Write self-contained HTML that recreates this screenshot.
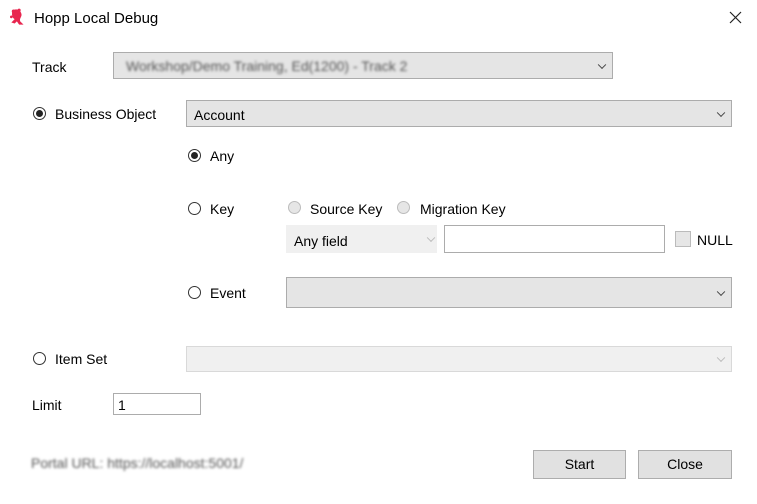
<!DOCTYPE html>
<html><head><style>
body{margin:0;width:757px;height:504px;background:#fff;position:relative;overflow:hidden;font-family:"Liberation Sans",sans-serif;font-size:14px;color:#000}
.a{position:absolute}
.t{position:absolute;line-height:16px;white-space:nowrap}
.cb{position:absolute;box-sizing:border-box;background:#e5e5e5;border:1px solid #acacac}
.cb.dis{background:#f0f0f0;border-color:#d9d9d9}
.arrow{position:absolute;right:7px;top:50%;width:5px;height:5px;border-right:1px solid #444;border-bottom:1px solid #444;transform:translateY(-70%) rotate(45deg)}
.dis .arrow{border-color:#bbb}
.r{position:absolute;width:11px;height:11px;border:1px solid #333;border-radius:50%;background:#fff}
.r.on::after{content:"";position:absolute;left:2px;top:2px;width:7px;height:7px;border-radius:50%;background:#222}
.r.d{border-color:#bcbcbc;background:#e6e6e6}
.in{position:absolute;box-sizing:border-box;border:1px solid #acacac;background:#fff}
.btn{position:absolute;box-sizing:border-box;border:1px solid #adadad;background:#e1e1e1;text-align:center;line-height:27px}
.blur{filter:blur(1.4px);color:#555}
</style></head><body>
<svg class="a" style="left:8px;top:8px" width="20" height="20" viewBox="0 0 16 18"><path d="M3 3 C5 0 10 1 11 5 C12 8 9 9 10 12 L13 15 L9 15 L7 12 L5 14 L2 13 L5 10 C3 9 2 6 3 3Z" fill="#e8264f"/><circle cx="4" cy="3" r="1.6" fill="#e8264f"/><circle cx="9" cy="2" r="1.4" fill="#e8264f"/><circle cx="2" cy="8" r="1.2" fill="#e8264f"/></svg>
<div class="t" style="left:34px;top:11px;font-size:15px">Hopp Local Debug</div>
<svg class="a" style="left:729px;top:11px" width="13" height="13"><path d="M1 1L12 12M12 1L1 12" stroke="#222" stroke-width="1.2"/></svg>

<div class="t" style="left:32px;top:59px">Track</div>
<div class="cb" style="left:113px;top:52px;width:500px;height:27px"><span class="t blur" style="left:12px;top:5px">Workshop/Demo Training, Ed(1200) - Track 2</span><div class="arrow"></div></div>

<div class="r on" style="left:33px;top:107px"></div>
<div class="t" style="left:55px;top:106px">Business Object</div>
<div class="cb" style="left:186px;top:100px;width:546px;height:27px"><span class="t" style="left:7px;top:6px">Account</span><div class="arrow"></div></div>

<div class="r on" style="left:188px;top:149px"></div>
<div class="t" style="left:210px;top:148px">Any</div>

<div class="r" style="left:188px;top:202px"></div>
<div class="t" style="left:210px;top:201px">Key</div>
<div class="r d" style="left:288px;top:201px"></div>
<div class="t" style="left:310px;top:201px">Source Key</div>
<div class="r d" style="left:397px;top:201px"></div>
<div class="t" style="left:420px;top:201px">Migration Key</div>

<div class="cb dis" style="left:286px;top:225px;width:151px;height:28px;border-color:#f0f0f0"><span class="t" style="left:7px;top:7px">Any field</span><div class="arrow" style="right:2px"></div></div>
<div class="in" style="left:444px;top:225px;width:221px;height:28px"></div>
<div class="a" style="left:675px;top:231px;width:14px;height:14px;border:1px solid #bbb;background:#e6e6e6"></div>
<div class="t" style="left:697px;top:232px">NULL</div>

<div class="r" style="left:188px;top:286px"></div>
<div class="t" style="left:210px;top:285px">Event</div>
<div class="cb" style="left:286px;top:277px;width:446px;height:31px"><div class="arrow"></div></div>

<div class="r" style="left:33px;top:352px"></div>
<div class="t" style="left:55px;top:351px">Item Set</div>
<div class="cb dis" style="left:186px;top:346px;width:546px;height:26px"><div class="arrow"></div></div>

<div class="t" style="left:32px;top:397px">Limit</div>
<div class="in" style="left:113px;top:393px;width:88px;height:22px"><span class="t" style="left:4px;top:3px">1</span></div>

<div class="t blur" style="left:31px;top:455px;font-size:14px">Portal URL: https://localhost:5001/</div>
<div class="btn" style="left:533px;top:450px;width:93px;height:29px">Start</div>
<div class="btn" style="left:638px;top:450px;width:94px;height:29px">Close</div>
</body></html>
